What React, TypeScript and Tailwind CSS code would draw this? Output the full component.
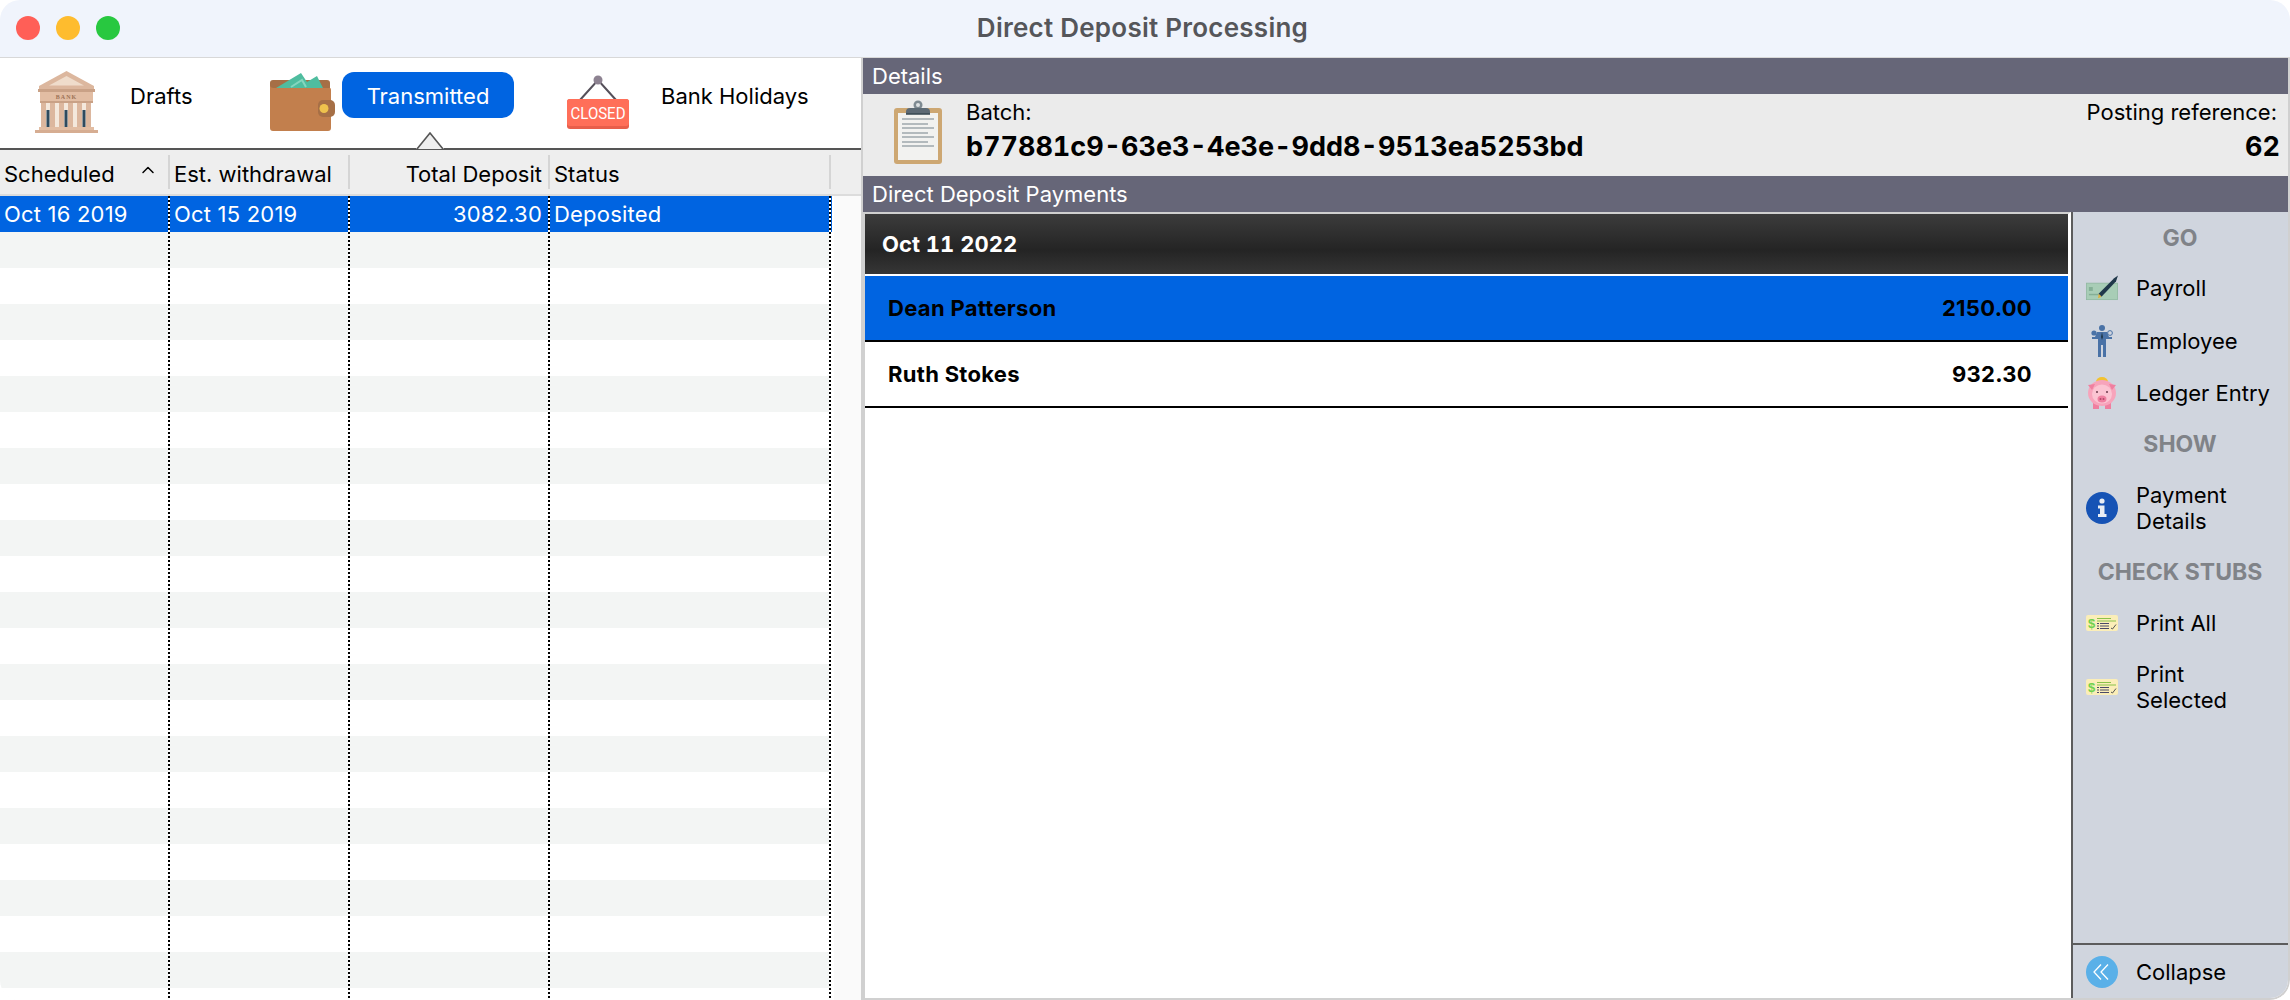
import { ChevronUp } from 'lucide-react'

function BankIcon() {
  return (
    <svg viewBox="0 0 65 63" className="w-[65px] h-[63px] shrink-0">
      <path d="M32.5 0 L60 15 V18 H5 V15 Z" fill="#dcb79e" />
      <path d="M32.5 5 L50 14.5 H15 Z" fill="#efdccb" />
      <rect x="4" y="18" width="57" height="3" fill="#c9a186" />
      <rect x="6" y="21" width="53" height="9" fill="#e2bda3" />
      <text x="32.5" y="28" textAnchor="middle" fontSize="6" fontWeight="700" fill="#9c7256" letterSpacing="1" fontFamily="Liberation Serif, serif">BANK</text>
      <rect x="6" y="30" width="53" height="2" fill="#c9a186" />
      <rect x="7" y="32" width="50" height="24" fill="#f4e8dc" />
      {[7, 16, 25, 34, 43, 52].map((x) => (
        <rect key={x} x={x} y="32" width="5" height="25" fill="#dcb79e" />
      ))}
      {[12.5, 30.5, 48.5].map((x) => (
        <rect key={x} x={x} y="39" width="3" height="17" fill="#2e4a5e" />
      ))}
      <rect x="5" y="56" width="55" height="3" fill="#e2bda3" />
      <rect x="1" y="59" width="63" height="3" fill="#d6ad92" />
    </svg>
  )
}

function WalletIcon() {
  return (
    <svg viewBox="0 0 66 58" className="w-[66px] h-[58px] shrink-0">
      <path d="M1 10 Q1 7 4 7 H58 Q61 7 61 10 V20 H1 Z" fill="#a66f46" />
      <path d="M7 15 L32 0 L38 9 L48 3 L54 15 Z" fill="#4fbd9f" />
      <path d="M22 14 L33 7 L37 14" fill="none" stroke="#86d6bf" strokeWidth="2" />
      <path d="M1 12 Q1 15 5 15 H61 Q62 15 62 17 V55 Q62 58 59 58 H4 Q1 58 1 55 Z" fill="#c27f4d" />
      <rect x="49" y="27" width="17" height="17" rx="5" fill="#a66f46" />
      <circle cx="55" cy="35.5" r="4.5" fill="#eec24d" />
    </svg>
  )
}

function ClosedIcon() {
  return (
    <svg viewBox="0 0 62 54" className="w-[62px] h-[54px] shrink-0">
      <path d="M13 25 L31 5 L49 25" fill="none" stroke="#55505a" strokeWidth="2" />
      <circle cx="31" cy="5" r="4.5" fill="#8d8291" />
      <rect x="0" y="24" width="62" height="30" rx="3" fill="#e85f4b" />
      <rect x="0" y="24" width="62" height="27" rx="3" fill="#ff6f59" />
      <text x="31" y="44" textAnchor="middle" fontSize="17" fontWeight="400" fill="#ffffff" fontFamily="Roboto, sans-serif" textLength="55" lengthAdjust="spacingAndGlyphs">CLOSED</text>
    </svg>
  )
}

function ClipboardIcon() {
  return (
    <svg viewBox="0 0 48 64" className="w-12 h-16 shrink-0">
      <rect x="0" y="8" width="48" height="56" rx="3" fill="#cda772" />
      <rect x="4" y="13" width="40" height="47" fill="#f2f2f0" />
      <circle cx="24" cy="5" r="4.5" fill="#7e8a92" />
      <circle cx="24" cy="5" r="2" fill="#dde1e3" />
      <path d="M12 12 Q12 8 16 8 H32 Q36 8 36 12 V13 H12 Z" fill="#5d6a75" />
      <rect x="12" y="13" width="24" height="1.8" fill="#40505a" />
      {[18, 23, 27, 32, 36, 41, 45].map((y, i) => (
        <rect key={y} x="8" y={y} width={i === 1 || i === 3 || i === 5 ? 26 : 32} height="2" fill="#b3babd" />
      ))}
    </svg>
  )
}

function CheckPenIcon() {
  return (
    <svg viewBox="0 0 33 26" className="w-[33px] h-[26px]">
      <rect x="0.5" y="8" width="32" height="17" fill="#a8cdb6" stroke="#8fb89f" strokeWidth="0.8" />
      <rect x="3" y="12" width="4" height="4" fill="#84af96" />
      <rect x="3" y="19" width="14" height="1.5" fill="#84af96" />
      <path d="M13 19 L29 3 L33 0 L31 6 L16 22 Z" fill="#20384a" />
      <path d="M13 19 L16 22 L12.5 23.5 Z" fill="#e0b23c" />
    </svg>
  )
}

function EmployeeIcon() {
  return (
    <svg viewBox="0 0 22 32" className="w-[22px] h-8">
      <g fill="#4a72a6">
        <circle cx="11" cy="3" r="3" />
        <path d="M6 7 H16 L18 12 H21 V14 H15 V19 L15 32 H12 V20 H10 V32 H7 V19 V14 H1 V12 H4 Z" />
        <circle cx="3" cy="8" r="2.6" />
        <circle cx="19" cy="8" r="2.4" fill="none" stroke="#4a72a6" strokeWidth="1" />
      </g>
      <path d="M11 7 L12 12 L11 15 L10 12 Z" fill="#20384a" />
    </svg>
  )
}

function PiggyIcon() {
  return (
    <svg viewBox="0 0 28 32" className="w-7 h-8">
      <path d="M8 5 A6 5 0 0 1 20 5 Z" fill="#f2c230" />
      <rect x="5" y="25" width="6" height="7" fill="#ef7f9f" />
      <rect x="17" y="25" width="6" height="7" fill="#ef7f9f" />
      <ellipse cx="14" cy="16" rx="14" ry="13" fill="#f7a4bb" />
      <path d="M0 8 L7 7 L4 13 Z M28 8 L21 7 L24 13 Z" fill="#ef7f9f" />
      <ellipse cx="14" cy="17" rx="10" ry="9.5" fill="#fbc4d2" />
      <ellipse cx="14" cy="22" rx="4.5" ry="3.5" fill="#ef7f9f" />
      <circle cx="12.5" cy="22" r="1" fill="#b34a6a" />
      <circle cx="15.5" cy="22" r="1" fill="#b34a6a" />
      <circle cx="9" cy="15" r="1" fill="#6a3a4a" />
      <circle cx="19" cy="15" r="1" fill="#6a3a4a" />
    </svg>
  )
}

function InfoIcon() {
  return (
    <svg viewBox="0 0 32 32" className="w-8 h-8">
      <circle cx="16" cy="16" r="16" fill="#1653b5" />
      <circle cx="16" cy="9" r="2.6" fill="#e8edf4" />
      <path d="M12 13.5 H18.5 V22 H20.5 V25 H12 V22 H14 V16.5 H12 Z" fill="#e8edf4" />
    </svg>
  )
}

function StubIcon() {
  return (
    <svg viewBox="0 0 32 16" className="w-8 h-4">
      <rect width="32" height="16" rx="2" fill="#fbeeb8" />
      <text x="5.5" y="13" textAnchor="middle" fontSize="13" fontWeight="700" fill="#6fd24f" fontFamily="Liberation Sans, sans-serif">$</text>
      <rect x="11" y="3" width="14" height="1" fill="#8ac24a" />
      <rect x="11" y="5.5" width="19" height="1" fill="#8ac24a" />
      {[8, 10.5, 13].map((y) => (
        <g key={y}>
          <rect x="11" y={y} width="2" height="1" fill="#4a4a68" />
          <rect x="14" y={y} width="9" height="1" fill="#4a4a68" />
        </g>
      ))}
      <path d="M25 13 L26.5 14 L30 9.5" fill="none" stroke="#555" strokeWidth="1" />
    </svg>
  )
}

function CollapseIcon() {
  return (
    <svg viewBox="0 0 32 32" className="w-8 h-8">
      <circle cx="16" cy="16" r="16" fill="#5ab0e8" />
      <path d="M15 8.5 L8 16 L15 23.5 M22 8.5 L15 16 L22 23.5" fill="none" stroke="#ffffff" strokeWidth="1.3" />
    </svg>
  )
}

function SectionBar({ title }: { title: string }) {
  return (
    <div className="h-9 bg-[#666678] text-white text-[22px] leading-9 pl-[9px] shrink-0">{title}</div>
  )
}

function SideItem({ icon, label, className }: { icon: React.ReactNode; label: React.ReactNode; className: string }) {
  return (
    <div className={`flex items-center ${className}`}>
      <div className="w-8 flex justify-center shrink-0">{icon}</div>
      <div className="ml-[18px] text-[22px] leading-[26px] text-black whitespace-nowrap">{label}</div>
    </div>
  )
}

function SideHeading({ title, className }: { title: string; className: string }) {
  return <div className={`text-center text-[23px] leading-6 font-bold text-[#808388] pr-[14px] ${className}`}>{title}</div>
}

const dots = 'bg-[linear-gradient(to_bottom,#000_50%,#fff_50%)] bg-[length:2px_4px] bg-right bg-repeat-y'
const columns = ['w-[170px]', 'w-[180px]', 'w-[200px]', 'w-[281px]']

export default function App() {
  const rows = Array.from({ length: 22 })

  return (
    <div className="w-[2290px] h-[1000px] bg-white overflow-hidden [font-family:Inter,sans-serif]">
      <div className="w-full h-full rounded-[20px] overflow-hidden flex flex-col bg-white">
        <div className="h-[57px] shrink-0 bg-[#f0f4fc] relative flex items-center justify-center pb-[2px]">
          <div className="absolute left-4 top-4 flex gap-4">
            <span className="w-6 h-6 rounded-full bg-[#ff5f57]" />
            <span className="w-6 h-6 rounded-full bg-[#febc2e]" />
            <span className="w-6 h-6 rounded-full bg-[#28c840]" />
          </div>
          <span className="text-[26px] tracking-[0.25px] font-semibold text-[#55565a] pr-[5px]">Direct Deposit Processing</span>
        </div>

        <div className="flex-1 min-h-0 flex border-t border-[#d8d8d8]">
          <div className="w-[861px] shrink-0 flex flex-col">
            <div className="h-[90px] shrink-0 flex items-center pb-[2px] relative">
              <div className="flex items-center ml-[34px] w-[235px]">
                <BankIcon />
                <span className="ml-[31px] mb-3 text-[22px] text-black">Drafts</span>
              </div>
              <div className="flex items-center w-[298px]">
                <WalletIcon />
                <span className="ml-[7px] mb-[14px] w-[172px] h-[46px] rounded-[12px] bg-[#0064e1] text-white text-[22px] leading-[48px] text-center">Transmitted</span>
              </div>
              <div className="flex items-center">
                <ClosedIcon />
                <span className="ml-8 mb-3 text-[22px] text-black whitespace-nowrap">Bank Holidays</span>
              </div>
              <svg viewBox="0 0 28 17" className="absolute left-[416px] bottom-[-1px] w-7 h-[17px]">
                <path d="M0 17 L14 1 L28 17 Z" fill="#eeeeee" />
                <path d="M1 17 L14 1 L27 17" fill="none" stroke="#555555" strokeWidth="1.6" />
              </svg>
            </div>
            <div className="h-[2px] bg-[#555555] shrink-0" />
            <div className="h-[46px] shrink-0 flex items-center bg-[#eeeeee] border-b-2 border-[#dcdcdc] text-[22px] text-black w-full">
              <div className="w-[170px] h-[34px] flex items-center justify-between pl-1 pr-[10px] border-r-2 border-[#d5d5d5] pt-[4px]">
                Scheduled
                <ChevronUp className="w-5 h-5 mb-[8px]" strokeWidth={1.8} />
              </div>
              <div className="w-[180px] h-[34px] flex items-center pl-1 border-r-2 border-[#d5d5d5] whitespace-nowrap pt-[4px]">Est. withdrawal</div>
              <div className="w-[200px] h-[34px] flex items-center justify-end pr-[6px] border-r-2 border-[#d5d5d5] pt-[4px]">Total Deposit</div>
              <div className="w-[281px] h-[34px] flex items-center pl-1 border-r-2 border-[#d5d5d5] pt-[4px]">Status</div>
            </div>
            <div className="flex-1 min-h-0 overflow-hidden flex bg-[#fafafa]">
              <div className="w-[834px] shrink-0 bg-white pr-[2px]">
                <div className="flex h-9 bg-[#0064e1] text-white text-[22px] leading-9 tracking-[0.2px]">
                  <div className={`w-[170px] pl-1 ${dots}`}>Oct 16 2019</div>
                  <div className={`w-[180px] pl-1 ${dots}`}>Oct 15 2019</div>
                  <div className={`w-[200px] pr-[8px] text-right ${dots}`}>3082.30</div>
                  <div className={`w-[281px] pl-1 ${dots}`}>Deposited</div>
                </div>
                {rows.map((_, i) => (
                  <div key={i} className={`flex h-9 w-[831px] ${i % 2 === 0 ? 'bg-[#f3f5f4]' : 'bg-white'}`}>
                    {columns.map((w) => (
                      <div key={w} className={`${w} h-full ${dots}`} />
                    ))}
                  </div>
                ))}
              </div>
            </div>
          </div>

          <div className="flex-1 min-w-0 flex flex-col border-l-2 border-[#d0d0d0] border-r-2 border-b-2 rounded-br-[20px] overflow-hidden">
            <SectionBar title="Details" />
            <div className="h-[82px] shrink-0 bg-[#ebebeb] flex items-center pl-[31px] pr-[8px] pb-[6px] text-black">
              <ClipboardIcon />
              <div className="ml-[24px] flex-1">
                <div className="text-[22px] leading-6 mb-[8px]">Batch:</div>
                <div className="text-[27px] leading-[34px] -mt-[2px] font-bold tabular-nums">b77881c9-63e3-4e3e-9dd8-9513ea5253bd</div>
              </div>
              <div className="text-right">
                <div className="text-[22px] leading-6 mb-[8px] pr-[3px]">Posting reference:</div>
                <div className="text-[27px] leading-[34px] -mt-[2px] font-bold tabular-nums">62</div>
              </div>
            </div>
            <SectionBar title="Direct Deposit Payments" />
            <div className="flex-1 min-h-0 flex">
              <div className="w-[1208px] shrink-0 bg-white border-t-2 border-l-2 border-[#d0d0d0] border-r-[3px] border-r-white">
                <div className="h-[60px] bg-[linear-gradient(to_bottom,#3c3c3c_0%,#242424_60%,#363636_100%)] text-white text-[22px] font-bold leading-[60px] pl-[17px] tabular-nums">Oct 11 2022</div>
                <div className="h-[66px] mt-[2px] bg-[#0064e1] border-b-2 border-black flex items-center justify-between pl-[23px] pr-[36px] text-[22px] font-bold text-black tracking-[0.3px]">
                  <span>Dean Patterson</span>
                  <span>2150.00</span>
                </div>
                <div className="h-[66px] bg-white border-b-2 border-black flex items-center justify-between pl-[23px] pr-[36px] text-[22px] font-bold text-black tracking-[0.3px]">
                  <span>Ruth Stokes</span>
                  <span>932.30</span>
                </div>
              </div>
              <div className="flex-1 min-w-0 bg-[#d0d5de] border-l-2 border-[#5c5c5c] flex flex-col">
                <div className="flex-1 min-h-0 pl-[13px]">
                  <SideHeading title="GO" className="mt-[14px]" />
                  <SideItem icon={<CheckPenIcon />} label="Payroll" className="mt-[23px] h-[30px]" />
                  <SideItem icon={<EmployeeIcon />} label="Employee" className="mt-[23px] h-[30px]" />
                  <SideItem icon={<PiggyIcon />} label="Ledger Entry" className="mt-[22px] h-[30px]" />
                  <SideHeading title="SHOW" className="mt-[24px]" />
                  <SideItem icon={<InfoIcon />} label={<>Payment<br />Details</>} className="mt-[26px] h-[52px]" />
                  <SideHeading title="CHECK STUBS" className="mt-[26px]" />
                  <SideItem icon={<StubIcon />} label="Print All" className="mt-[24px] h-[30px]" />
                  <SideItem icon={<StubIcon />} label={<>Print<br />Selected</>} className="mt-[23px] h-[52px]" />
                </div>
                <div className="h-[55px] shrink-0 border-t-2 border-[#5c5c5c] pl-[13px] flex items-center">
                  <SideItem icon={<CollapseIcon />} label="Collapse" className="" />
                </div>
              </div>
            </div>
          </div>
        </div>
      </div>
    </div>
  )
}
